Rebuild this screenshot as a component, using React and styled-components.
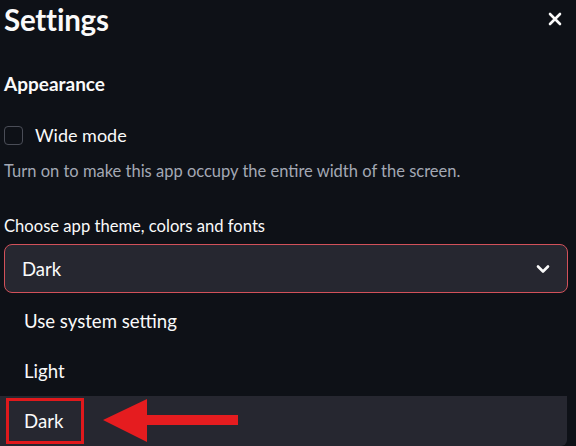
import React from 'react'
import styled, { createGlobalStyle } from 'styled-components'

const GlobalStyle = createGlobalStyle`
  html, body {
    margin: 0;
    padding: 0;
    background: #0e1117;
  }
  body {
    font-family: Lato, "Liberation Sans", sans-serif;
    color: #fafafa;
  }
`

const Panel = styled.div`
  position: relative;
  width: 576px;
  height: 446px;
  overflow: hidden;
  background: #0e1117;
`

const Header = styled.header`
  display: flex;
  align-items: center;
  justify-content: space-between;
  height: 38px;
  padding: 0 14px 0 4px;
`

const Title = styled.h1`
  margin: 0;
  font-size: 29.5px;
  font-weight: 700;
  letter-spacing: -0.2px;
`

const Close = styled.button`
  display: flex;
  background: none;
  border: 0;
  padding: 0;
  color: #fafafa;
  cursor: pointer;
`

const Body = styled.div`
  padding: 0 8px 0 4px;
`

const Section = styled.h2`
  margin: 34px 0 0;
  font-size: 19px;
  font-weight: 700;
  line-height: 24px;
`

const CheckRow = styled.label`
  display: flex;
  align-items: center;
  gap: 12px;
  margin-top: 27px;
  font-size: 18px;
  line-height: 24px;
`

const Box = styled.span`
  width: 17px;
  height: 17px;
  border: 1px solid #4a4d57;
  border-radius: 4px;
`

const Help = styled.p`
  margin: 12px 0 0;
  font-size: 16.5px;
  line-height: 24px;
  color: #a3a8b4;
`

const Label = styled.div`
  margin-top: 32px;
  font-size: 16.6px;
  line-height: 22px;
`

const Select = styled.div`
  display: flex;
  align-items: center;
  justify-content: space-between;
  margin-top: 7px;
  height: 47px;
  padding: 0 17px 0 17px;
  background: #262730;
  border: 1px solid #d2515a;
  border-radius: 8px;
  font-size: 18.5px;
`

const Menu = styled.ul`
  list-style: none;
  margin: 3px 0 0 -4px;
  padding: 0;
  width: 567px;
`

const Option = styled.li`
  display: flex;
  align-items: center;
  height: 50px;
  padding-left: 24px;
  font-size: 18.6px;
  background: ${(p) => (p.$active ? '#262730' : 'transparent')};
  border-radius: ${(p) => (p.$active ? '0 0 6px 0' : '0')};
`

const Annotation = styled.svg`
  position: absolute;
  left: 0;
  top: 0;
  pointer-events: none;
`

export default function App() {
  return (
    <Panel>
      <GlobalStyle />
      <Header>
        <Title>Settings</Title>
        <Close aria-label="Close">
          <svg width="14" height="14" viewBox="0 0 14 14">
            <path d="M2 2L12 12M12 2L2 12" stroke="#fafafa" strokeWidth="2.6" strokeLinecap="round" />
          </svg>
        </Close>
      </Header>
      <Body>
        <Section>Appearance</Section>
        <CheckRow>
          <Box />
          Wide mode
        </CheckRow>
        <Help>Turn on to make this app occupy the entire width of the screen.</Help>
        <Label>Choose app theme, colors and fonts</Label>
        <Select>
          <span>Dark</span>
          <svg width="14" height="10" viewBox="0 0 14 10">
            <path d="M2 2.5L7 7.5L12 2.5" fill="none" stroke="#fafafa" strokeWidth="2.6" strokeLinecap="round" strokeLinejoin="round" />
          </svg>
        </Select>
        <Menu>
          <Option>Use system setting</Option>
          <Option>Light</Option>
          <Option $active>Dark</Option>
        </Menu>
      </Body>
      <Annotation width="576" height="446" viewBox="0 0 576 446">
        <rect x="7.5" y="399.5" width="75" height="43" fill="none" stroke="#e0191c" strokeWidth="3" />
        <path d="M103 420L147 399L147 415L238 415L238 425L147 425L147 442Z" fill="#e51c1f" />
      </Annotation>
    </Panel>
  )
}
